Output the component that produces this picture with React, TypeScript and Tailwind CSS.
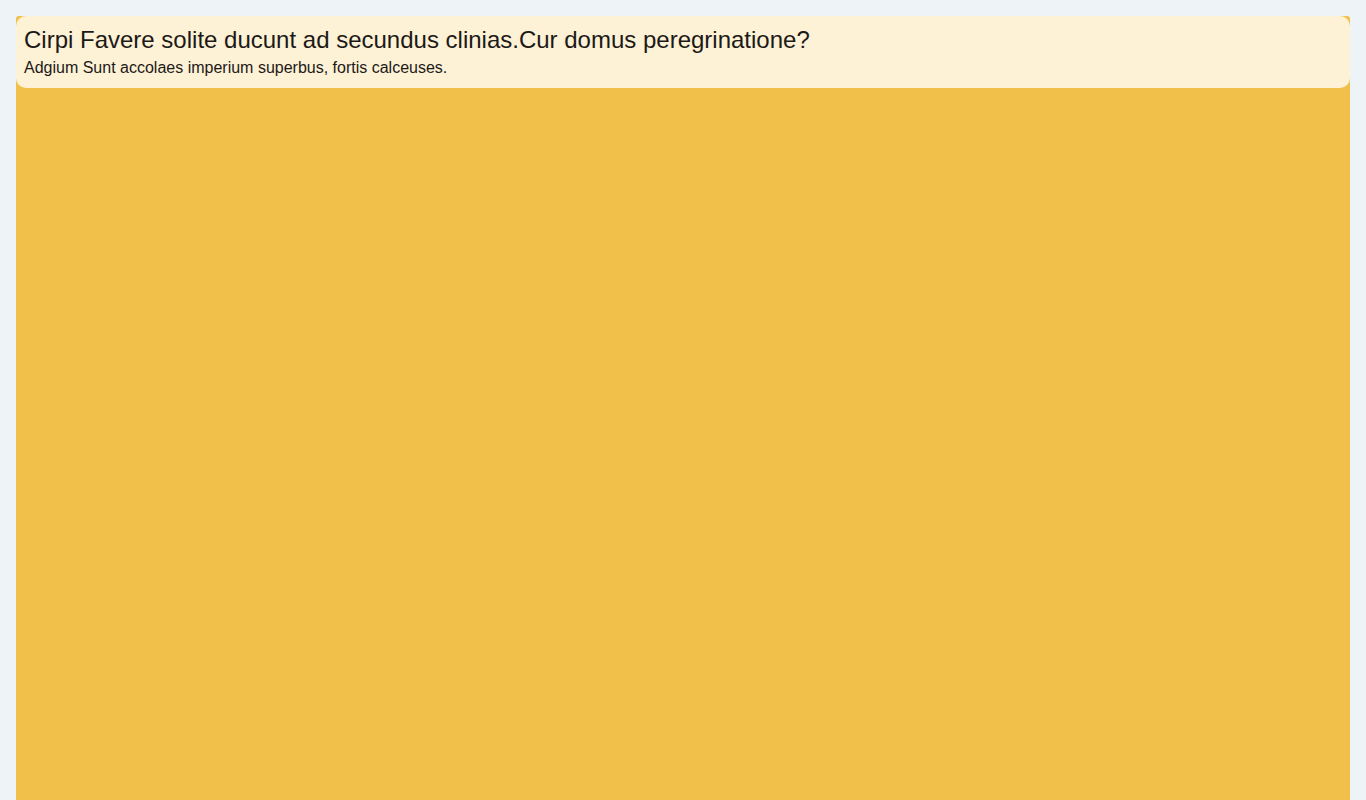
export default function App() {
  return (
    <div className="min-h-screen bg-[#eef3f7] p-4 font-['Liberation_Sans',Arial,sans-serif] text-[#1c1917]">
      <div className="flex h-[900px] flex-col rounded-t-[3px] bg-[#f0c04b]">
        <header className="flex flex-col rounded-[10px] bg-[#fdf1d6] px-2 py-2">
          <h1 className="text-[24px] leading-8">
            Cirpi Favere solite ducunt ad secundus clinias.Cur domus peregrinatione?
          </h1>
          <p className="text-[16px] leading-6">Adgium Sunt accolaes imperium superbus, fortis calceuses.</p>
        </header>
      </div>
    </div>
  );
}
